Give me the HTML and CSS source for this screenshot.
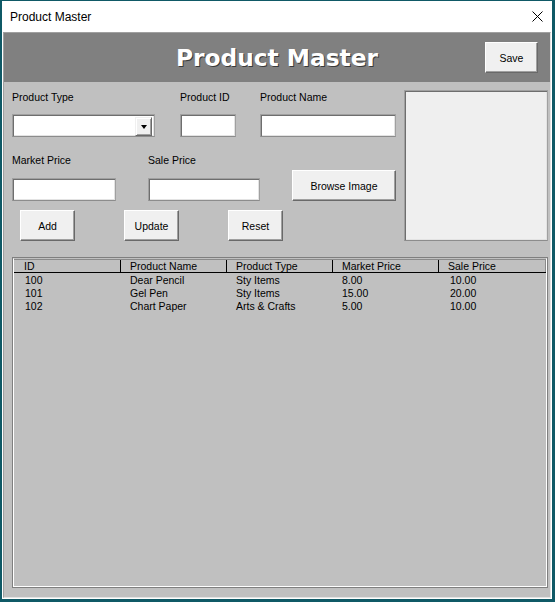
FILE: index.html
```html
<!DOCTYPE html>
<html lang="en">
<head>
<meta charset="utf-8">
<title>Product Master</title>
<link rel="stylesheet" href="styles.css">
</head>
<body>
<div class="window">
  <div class="titlebar">
    <span class="title">Product Master</span>
    <svg class="close" width="11" height="11" viewBox="0 0 11 11" aria-hidden="true">
      <path d="M0.5 0.5 L10.5 10.5 M10.5 0.5 L0.5 10.5" stroke="#000" stroke-width="1" fill="none"/>
    </svg>
  </div>
  <div class="client">
    <div class="header">
      <div></div>
      <h1 class="heading">Product Master</h1>
      <div class="header-actions"><button class="btn btn-save">Save</button></div>
    </div>
    <div class="content">
      <div class="top">
        <div class="fields">
          <div class="grid-a label-row">
            <span class="label">Product Type</span>
            <span class="label">Product ID</span>
            <span class="label">Product Name</span>
          </div>
          <div class="grid-a control-row">
            <div class="combo sunken">
              <span class="combo-btn"><span class="arrow"></span></span>
            </div>
            <input class="field sunken w-id" type="text">
            <input class="field sunken w-name" type="text">
          </div>
          <div class="grid-b">
            <span class="label">Market Price</span>
            <span class="label">Sale Price</span>
            <span></span>
            <input class="field sunken w-market" type="text">
            <input class="field sunken w-sale" type="text">
            <button class="btn btn-browse">Browse Image</button>
          </div>
          <div class="actions">
            <button class="btn btn-small">Add</button>
            <button class="btn btn-small">Update</button>
            <button class="btn btn-small">Reset</button>
          </div>
        </div>
        <div class="image-box"></div>
      </div>
      <div class="listbox">
        <div class="list-inner">
          <div class="list-head">
            <span>ID</span><span>Product Name</span><span>Product Type</span><span>Market Price</span><span>Sale Price</span>
          </div>
          <div class="list-body">
            <div class="list-row"><span>100</span><span>Dear Pencil</span><span>Sty Items</span><span>8.00</span><span>10.00</span></div>
            <div class="list-row"><span>101</span><span>Gel Pen</span><span>Sty Items</span><span>15.00</span><span>20.00</span></div>
            <div class="list-row"><span>102</span><span>Chart Paper</span><span>Arts &amp; Crafts</span><span>5.00</span><span>10.00</span></div>
          </div>
        </div>
      </div>
    </div>
  </div>
</div>
</body>
</html>
```
FILE: styles.css
```css
* { box-sizing: border-box; }

html, body {
  margin: 0;
  width: 555px;
  height: 602px;
  overflow: hidden;
}

body {
  background: #0f5966;
  padding: 1px 3px 3px 2px;
  font-family: "Liberation Sans", Arial, sans-serif;
  font-size: 10.5px;
  color: #000;
}

.window {
  width: 550px;
  height: 598px;
  background: #ffffff;
  display: flex;
  flex-direction: column;
}

.titlebar {
  height: 31px;
  flex: none;
  display: flex;
  align-items: center;
  justify-content: space-between;
  padding: 0 9px 0 8px;
}

.title {
  font-size: 12px;
  line-height: 14px;
}

.close { display: block; }

.client {
  margin: 0 1px 1px 1px;
  height: 566px;
  border: 1px solid;
  border-color: #a0a0a0 #e3e3e3 #e3e3e3 #a0a0a0;
  background: #c0c0c0;
  display: flex;
  flex-direction: column;
}

.header {
  height: 49px;
  flex: none;
  background: #808080;
  display: grid;
  grid-template-columns: 1fr auto 1fr;
  align-items: center;
}

.heading {
  margin: 0;
  font-family: "DejaVu Sans", Verdana, sans-serif;
  font-weight: bold;
  font-size: 23.3px;
  line-height: 28px;
  color: #ffffff;
  text-shadow: 1px 1px 0 #3a3a3a;
  padding-top: 1px;
}

.header-actions {
  display: flex;
  justify-content: flex-end;
  padding-right: 12px;
}

.btn {
  font-family: "Liberation Sans", Arial, sans-serif;
  font-size: 10.5px;
  color: #000;
  background: #f0f0f0;
  border: 1px solid;
  border-color: #ffffff #696969 #696969 #ffffff;
  box-shadow: inset -1px -1px 0 #a0a0a0;
  padding: 0;
  margin: 0;
  height: 31px;
  display: flex;
  align-items: center;
  justify-content: center;
}

.btn-save { width: 53px; }
.btn-browse { width: 104px; }
.btn-small { width: 55px; }

.content {
  flex: 1;
  display: flex;
  flex-direction: column;
  padding: 8px 1px 9px 8px;
}

.top {
  display: flex;
  gap: 8px;
  height: 151px;
  flex: none;
}

.fields {
  width: 384px;
  flex: none;
  display: flex;
  flex-direction: column;
}

.label {
  line-height: 14px;
  height: 14px;
  white-space: nowrap;
}

.grid-a {
  display: grid;
  grid-template-columns: 168px 80px 136px;
}

.control-row { margin-top: 10px; }

.sunken {
  border: 1px solid;
  border-color: #a0a0a0 #a0a0a0 #8c8c8c #a0a0a0;
  box-shadow: inset 1px 1px 0 #6e6e6e, inset -1px -1px 0 #e3e3e3;
  background: #ffffff;
}

.field {
  height: 23px;
  margin: 0;
  padding: 0 3px;
  font: inherit;
  outline: none;
  appearance: none;
}

.combo {
  width: 143px;
  height: 23px;
  display: flex;
  justify-content: flex-end;
  padding: 1px;
}

.combo-btn {
  width: 17px;
  height: 19px;
  margin: 1px 1px 1px 0;
  background: #f0f0f0;
  border: 1px solid;
  border-color: #f0f0f0 #696969 #696969 #f0f0f0;
  box-shadow: inset 1px 1px 0 #ffffff, inset -1px -1px 0 #a0a0a0;
  display: flex;
  align-items: center;
  justify-content: center;
}

.arrow {
  width: 0;
  height: 0;
  border-left: 3.5px solid transparent;
  border-right: 3.5px solid transparent;
  border-top: 4px solid #000;
  margin-top: 1px;
}

.w-id { width: 56px; }
.w-name { width: 136px; }
.w-market { width: 104px; }
.w-sale { width: 112px; }

.grid-b {
  margin-top: 16px;
  display: grid;
  grid-template-columns: 136px 144px 104px;
  grid-template-rows: 14px 31px;
  row-gap: 3px;
  align-items: end;
}

.actions {
  margin-top: 9px;
  display: flex;
  gap: 49px;
  padding-left: 8px;
}

.image-box {
  flex: none;
  width: 144px;
  height: 151px;
  background: #efefef;
  border: 1px solid;
  border-color: #a0a0a0 #a0a0a0 #8c8c8c #a0a0a0;
  box-shadow: inset 1px 1px 0 #6e6e6e, inset -1px -1px 0 #e3e3e3;
}

.listbox {
  margin-top: 16px;
  height: 331px;
  width: 536px;
  flex: none;
  border: 1px solid #7f7f7f;
}

.list-inner {
  height: 100%;
  border: 1px solid #ffffff;
  border-top-color: #c0c0c0;
}

.list-head,
.list-row {
  display: grid;
  grid-template-columns: 107px 106px 106px 106px 1fr;
}

.list-head {
  border-top: 1px solid #8a8a8a;
  border-bottom: 1px solid #000;
  height: 14px;
  line-height: 12px;
}

.list-head span {
  padding-left: 9px;
  border-right: 1px solid #000;
  white-space: nowrap;
}

.list-head span:first-child { padding-left: 10px; }
.list-head span:last-child { border-right-color: #8a8a8a; }

.list-body { padding-top: 1px; }

.list-row {
  height: 13px;
  line-height: 13px;
}

.list-row span {
  padding-left: 9px;
  white-space: nowrap;
}

.list-row span:first-child { padding-left: 11px; }
.list-row span:last-child { padding-left: 11px; }
```
